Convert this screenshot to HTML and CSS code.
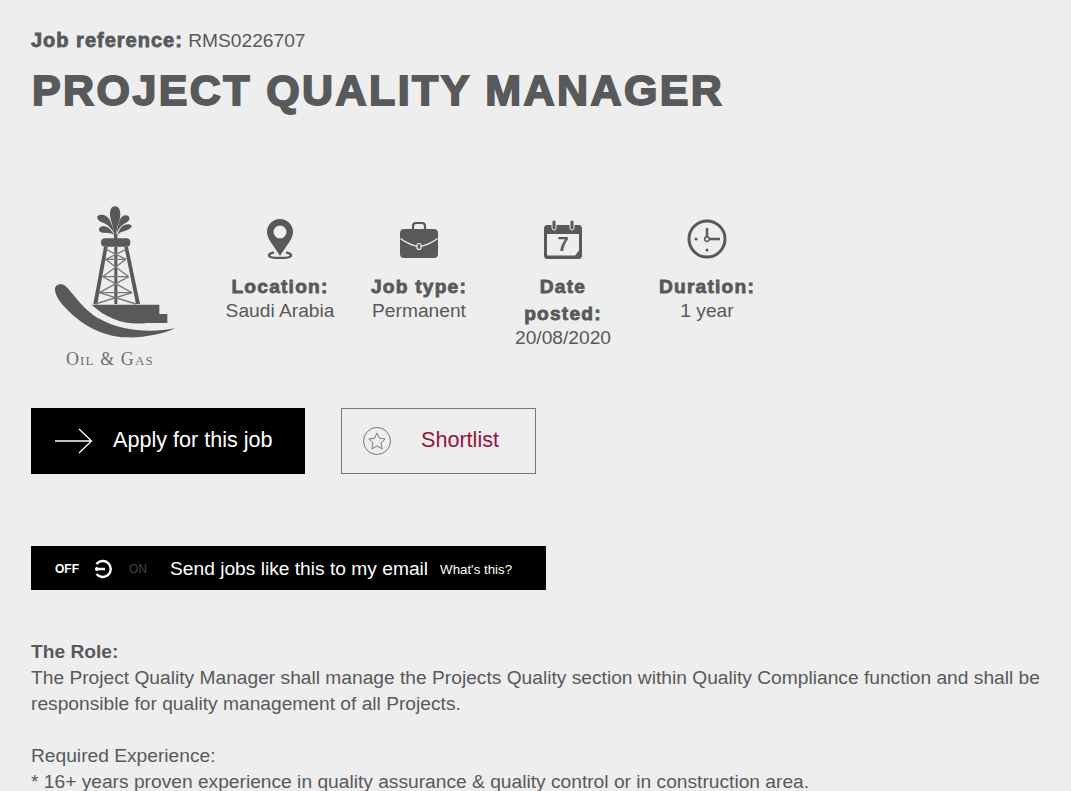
FILE: index.html
```html
<!DOCTYPE html>
<html lang="en">
<head>
    <meta charset="UTF-8">
    <meta name="viewport" content="width=device-width, initial-scale=1.0">
    <title>Project Quality Manager</title>
    <link rel="stylesheet" href="styles.css">
</head>
<body>

    <div class="container">
        <p class="reference"><strong>Job reference:</strong> RMS0226707</p>
        <h1>PROJECT QUALITY MANAGER</h1>

        <div class="summary">
            <div class="sector">
                <svg class="sector-icon" width="130" height="137" viewBox="60 40 390 411">
                    <g fill="#58595b">
                        <path d="M255 47c11 0 16 11 16 23 0 20-10 34-13 62h-5c-3-28-13-42-13-62 0-12 4-23 15-23z"/>
                        <path d="M203 76C212 68 232 72 240 90 246 102 250 115 254 130 244 112 232 100 218 96 208 92 198 84 203 76z"/>
                        <path d="M297 78C288 70 275 74 269 88 265 100 262 115 258 130 266 114 274 104 285 98 294 93 302 86 297 78z"/>
                        <path d="M208 112C214 104 232 106 240 116 246 122 250 128 252 132 242 126 228 126 217 126 209 125 205 118 208 112z"/>
                        <path d="M304 104C298 98 282 100 274 110 268 118 264 126 261 132 270 124 282 122 292 118 300 115 307 110 304 104z"/>
                        <rect x="252" y="130" width="10" height="16"/>
                        <rect x="213" y="143" width="88" height="25" rx="12"/>
                        <path d="M222 168h11l-31 172h-12z"/>
                        <path d="M283 168h11l36 172h-12z"/>
                        <rect x="253" y="168" width="9" height="172"/>
                        <path d="M185 342H388V370H412V397H350C290 405 230 385 185 342z"/>
                        <path d="M75 300C72 283 90 275 105 285 125 300 160 360 210 385 280 425 370 425 435 413 400 430 340 442 290 440 210 438 150 395 115 360 100 345 80 325 75 300z"/>
                    </g>
                    <g fill="none" stroke="#77787b" stroke-width="4">
                        <path d="M226 206h62M218 258h78M208 306h98"/>
                        <path d="M228 176l60 30M288 176l-60 30M226 206l70 52M288 206l-70 52M218 258l88 48M296 258l-88 48M208 306l110 34M306 306l-110 34"/>
                    </g>
                </svg>
                <span class="sector-name">Oil &amp; Gas</span>
            </div>

            <div class="fact fact-location">
                <svg class="fact-icon" width="40" height="40" viewBox="0 0 40 40">
                    <path fill="#58595b" fill-rule="evenodd" d="M20 0c7.200 0 13 5.800 13 13 0 7-7 14-13 24-6-10-13-17-13-24C7 5.800 12.800 0 20 0zm0 6.500a6.500 6.500 0 1 0 0 13 6.500 6.500 0 0 0 0-13z"/>
                    <path fill="none" stroke="#58595b" stroke-width="2.400" d="M14 33.500c-3 .5-5 1.800-5 3 0 1.800 5 2.500 11 2.500s11-.7 11-2.500c0-1.200-2-2.500-5-3"/>
                </svg>
                <strong>Location:</strong>
                <span>Saudi Arabia</span>
            </div>
            <div class="fact fact-type">
                <svg class="fact-icon" width="40" height="40" viewBox="0 0 40 40">
                    <path fill="none" stroke="#58595b" stroke-width="2.200" d="M14 11V7c0-2 1-3 3-3h6c2 0 3 1 3 3v4"/>
                    <path fill="#58595b" d="M5 10h30c3 0 4 2 4 4v21c0 3-2 4-4 4H5c-2 0-4-1-4-4V14c0-2 1-4 4-4z"/>
                    <path fill="none" stroke="#eeeeee" stroke-width="1.300" d="M1.500 19.500C7 24 13 26 18 27.300M22 27.300c5-1.300 11-3.300 16.500-7.800"/>
                    <rect x="18" y="24.500" width="4" height="6" rx="2" fill="none" stroke="#eeeeee" stroke-width="1.200"/>
                </svg>
                <strong>Job type:</strong>
                <span>Permanent</span>
            </div>
            <div class="fact fact-date">
                <svg class="fact-icon" width="40" height="40" viewBox="0 0 40 40">
                    <path fill="#58595b" fill-rule="evenodd" d="M4 6h32c1.500 0 3 1.500 3 3v28c0 1.500-1.500 3-3 3H4c-1.500 0-3-1.500-3-3V9c0-1.500 1.500-3 3-3zm0 9v20.500c0 .5.500 1 1 1h27l4-5V15z"/>
                    <rect x="9" y="1" width="4" height="10" rx="2" fill="#58595b" stroke="#eeeeee" stroke-width="1"/>
                    <rect x="27" y="1" width="4" height="10" rx="2" fill="#58595b" stroke="#eeeeee" stroke-width="1"/>
                    <text x="20" y="32" class="cal-day">7</text>
                </svg>
                <strong>Date posted:</strong>
                <span>20/08/2020</span>
            </div>
            <div class="fact fact-duration">
                <svg class="fact-icon" width="40" height="40" viewBox="0 0 40 40">
                    <circle cx="20" cy="20" r="18" fill="none" stroke="#58595b" stroke-width="3"/>
                    <path fill="none" stroke="#58595b" stroke-width="2.500" d="M20 9v8.500M22.500 20H33"/>
                    <circle cx="20" cy="20" r="2.300" fill="none" stroke="#58595b" stroke-width="1.500"/>
                    <circle cx="9" cy="20" r="1.500" fill="#58595b"/>
                    <circle cx="20" cy="31" r="1.500" fill="#58595b"/>
                </svg>
                <strong>Duration:</strong>
                <span>1 year</span>
            </div>
        </div>

        <div class="actions">
            <a class="btn btn-apply" href="#">
                <svg width="38" height="26" viewBox="0 0 38 26">
                    <path fill="none" stroke="#fff" stroke-width="1.300" d="M0 13h36M24 1l12.500 12L24 25"/>
                </svg>
                <span class="btn-label">Apply for this job</span>
            </a>
            <a class="btn btn-shortlist" href="#">
                <svg width="30" height="30" viewBox="0 0 30 30">
                    <circle cx="15" cy="15" r="13.500" fill="none" stroke="#77787b" stroke-width="1"/>
                    <path fill="none" stroke="#77787b" stroke-width="1" d="M15 7l2.500 5.300 5.700.7-4.200 4 1.100 5.800L15 20l-5.100 2.800L11 17l-4.200-4 5.700-.7z"/>
                </svg>
                <span class="btn-label">Shortlist</span>
            </a>
        </div>

        <div class="alert-bar">
            <span class="toggle-off">OFF</span>
            <svg width="20" height="20" viewBox="0 0 20 20">
                <path fill="none" stroke="#fff" stroke-width="2.400" d="M3.500 5A8 8 0 1 1 3.500 15M2 10h10"/>
                <path fill="none" stroke="#fff" stroke-width="1.200" d="M4.500 8L2.500 10 4.500 12"/>
            </svg>
            <span class="toggle-on">ON</span>
            <span class="alert-text">Send jobs like this to my email</span>
            <a class="alert-help" href="#">What's this?</a>
        </div>

        <div class="description">
            <p><strong>The Role:</strong><br>
            The Project Quality Manager shall manage the Projects Quality section within Quality Compliance function and shall be responsible for quality management of all Projects.</p>
            <p>Required Experience:<br>
            * 16+ years proven experience in quality assurance &amp; quality control or in construction area.</p>
        </div>
    </div>

</body>
</html>
```

FILE: styles.css
```css
html, body {
    height: 791px;
    overflow: hidden;
}
body {
    font-family: "Liberation Sans", Arial, sans-serif;
    margin: 0;
    background-color: #eeeeee;
    color: #58595b;
}
.container {
    padding: 28px 0 0 31px;
}
.reference {
    margin: 0;
    font-size: 19.2px;
    line-height: 24px;
}
.reference strong {
    font-size: 20px;
    letter-spacing: 1px;
    -webkit-text-stroke: 0.8px #58595b;
}
h1 {
    margin: 11px 0 0 1px;
    font-size: 43px;
    line-height: 52px;
    letter-spacing: 2.4px;
    -webkit-text-stroke: 1.8px #58595b;
}
.summary {
    display: flex;
    align-items: flex-start;
    margin-top: 84px;
    height: 199px;
}
.sector {
    width: 160px;
    margin-top: 4px;
    display: flex;
    flex-direction: column;
}
.sector-icon {
    display: block;
    margin-left: 19px;
}
.sector-name {
    margin: 8px 0 0 35px;
    font-family: "Liberation Serif", serif;
    font-variant: small-caps;
    font-size: 18px;
    line-height: 20px;
    letter-spacing: 1.1px;
    color: #6d6e71;
}
.fact {
    display: flex;
    flex-direction: column;
    align-items: center;
    text-align: center;
    font-size: 19.2px;
    line-height: 22px;
}
.fact strong {
    line-height: 27px;
    letter-spacing: 1.2px;
    -webkit-text-stroke: 0.8px #58595b;
}
.fact-icon {
    display: block;
    margin: 19px 0 14px;
}
.fact-location {
    width: 118px;
    margin-left: 30px;
}
.fact-type {
    width: 110px;
    margin-left: 25px;
}
.fact-date {
    width: 100px;
    margin-left: 39px;
}
.fact-duration {
    width: 100px;
    margin-left: 44px;
}
.actions {
    display: flex;
    gap: 36px;
    margin-top: 9px;
}
.btn {
    display: flex;
    align-items: center;
    height: 66px;
    box-sizing: border-box;
    font-size: 21.6px;
    text-decoration: none;
}
.btn-label {
    margin-bottom: 2px;
}
.btn-apply {
    width: 274px;
    padding-left: 24px;
    gap: 20px;
    background: #000;
    color: #fff;
}
.btn-shortlist {
    width: 195px;
    padding-left: 20px;
    gap: 29px;
    border: 1px solid #77787b;
    color: #96123f;
}
.alert-bar {
    display: flex;
    align-items: center;
    width: 515px;
    height: 44px;
    margin-top: 72px;
    padding: 2px 0 0 24px;
    box-sizing: border-box;
    background: #000;
    color: #fff;
}
.toggle-off {
    font-size: 12px;
    font-weight: bold;
    margin-right: 14px;
}
.toggle-on {
    font-size: 12px;
    color: #444;
    margin: 0 23px 0 16px;
}
.alert-text {
    font-size: 19.2px;
}
.alert-help {
    margin-left: 12px;
    font-size: 13.3px;
    color: #fff;
    text-decoration: none;
}
.description {
    margin-top: 49px;
    width: 1025px;
    font-size: 19.2px;
    line-height: 26px;
}
.description p {
    margin: 0 0 26px;
}
.cal-day {
    font-family: "Liberation Sans", Arial, sans-serif;
    font-size: 20px;
    font-weight: bold;
    fill: #58595b;
    text-anchor: middle;
}
```
